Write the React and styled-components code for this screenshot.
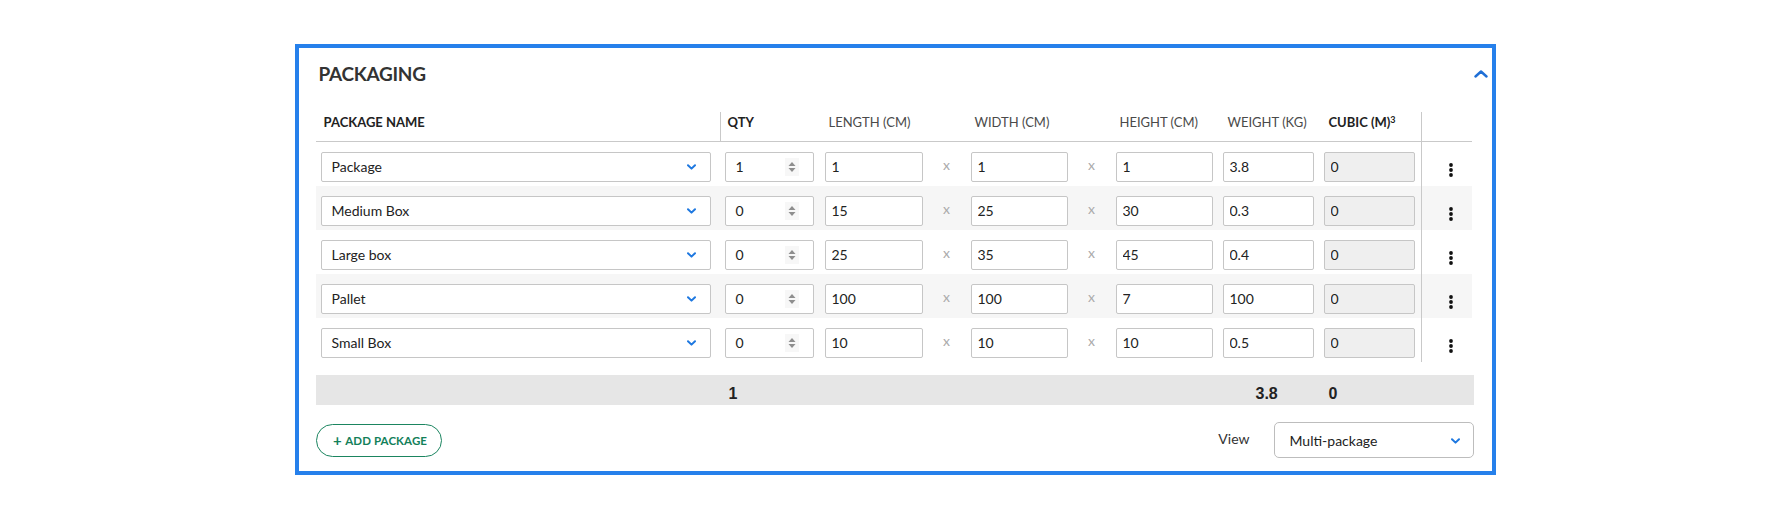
import React from 'react'
import styled, { createGlobalStyle } from 'styled-components'

const GlobalStyle = createGlobalStyle`
  body {
    margin: 0;
    background: #fff;
    font-family: Lato, "Open Sans", sans-serif;
    color: #222;
  }
`;

const COLS = '404px 100px 103px 48px 97px 48px 97px 101px 107px 1fr';

const Page = styled.div`
  display: flex;
  justify-content: center;
  padding-top: 44px;
`;

const Panel = styled.section`
  box-sizing: border-box;
  width: 1201px;
  height: 431px;
  border: 4px solid #2680eb;
  padding: 14px 17px 0;
`;

const TitleRow = styled.header`
  display: flex;
  justify-content: space-between;
  align-items: center;
  height: 24px;
  margin-right: -13px;
`;

const Title = styled.h2`
  margin: 0;
  padding-left: 3px;
  font-size: 19px;
  line-height: 24px;
  font-weight: 700;
  color: #333;
  letter-spacing: -0.3px;
`;

const Table = styled.div`
  width: 1156px;
  margin-top: 26px;
`;

const HeadRow = styled.div`
  display: grid;
  grid-template-columns: ${COLS};
  height: 30px;
  box-sizing: border-box;
  border-bottom: 1px solid #c9c9c9;
`;

const HeadCell = styled.div`
  padding: 2px 0 0 ${p => p.$inset}px;
  font-size: 13px;
  line-height: 16px;
  font-weight: ${p => (p.$bold ? 700 : 400)};
  color: ${p => (p.$bold ? '#222' : '#4a4a4a')};
  border-left: ${p => (p.$divider ? '1px solid #c9c9c9' : 'none')};
  white-space: nowrap;

  sup {
    font-size: 9px;
    vertical-align: top;
    line-height: 12px;
  }
`;

const Row = styled.div`
  display: grid;
  grid-template-columns: ${COLS};
  height: 44px;
  background: ${p => (p.$striped ? '#f6f6f6' : 'transparent')};
`;

const Cell = styled.div`
  box-sizing: border-box;
  display: flex;
  align-items: flex-start;
  padding: 10px 0 0 ${p => p.$inset || 0}px;
`;

const Times = styled.div`
  display: flex;
  justify-content: center;
  padding-top: 16px;
  font-size: 14px;
  line-height: 14px;
  color: #aaa;
`;

const ActionCell = styled.div`
  border-left: 1px solid #c9c9c9;
  padding: 19px 0 0 27px;
`;

const SelectBox = styled.div`
  box-sizing: border-box;
  width: ${p => p.$w}px;
  height: 30px;
  display: flex;
  align-items: center;
  justify-content: space-between;
  padding: 0 14px 2px 10px;
  border: 1px solid #c6c6c6;
  border-radius: 2px;
  background: #fff;
  font-size: 14px;
  color: #222;

  svg {
    margin-top: 2px;
  }
`;

const Field = styled.input`
  box-sizing: border-box;
  width: ${p => p.$w}px;
  height: 30px;
  margin: 0;
  padding: 0 0 2px 6px;
  border: 1px solid #c6c6c6;
  border-radius: 2px;
  background: ${p => (p.$disabled ? '#efefef' : '#fff')};
  font-family: Lato, "Open Sans", sans-serif;
  font-size: 14px;
  color: #222;
  outline: none;
`;

const QtyBox = styled.div`
  box-sizing: border-box;
  width: 89px;
  height: 30px;
  display: flex;
  align-items: center;
  justify-content: space-between;
  padding: 0 14px 2px 10px;
  border: 1px solid #c6c6c6;
  border-radius: 2px;
  background: #fff;
  font-size: 14px;
`;

const Spinner = styled.span`
  display: flex;
  padding: 3px;
  margin-top: 2px;
  background: #f7f7f7;
`;

const TotalBar = styled.div`
  display: grid;
  grid-template-columns: ${COLS};
  width: 1158px;
  height: 30px;
  margin-top: 13px;
  background: #e6e6e6;
`;

const Total = styled.div`
  padding: 11px 0 0 ${p => p.$inset || 0}px;
  font-family: "Liberation Sans", Arial, sans-serif;
  font-weight: 700;
  font-size: 16px;
  line-height: 16px;
  color: #222;
`;

const Bottom = styled.footer`
  display: flex;
  justify-content: space-between;
  align-items: center;
  height: 36px;
  margin-top: 17px;
  width: 1158px;
`;

const AddButton = styled.button`
  box-sizing: border-box;
  width: 126px;
  height: 33px;
  border: 1px solid #1b8560;
  border-radius: 17px;
  background: #fff;
  color: #13805a;
  font-family: Lato, "Open Sans", sans-serif;
  font-size: 11.5px;
  font-weight: 700;
  letter-spacing: 0.1px;
  cursor: pointer;
  padding: 0 0 0 3px;

  b {
    font-size: 15px;
    font-weight: 700;
    margin-right: 1px;
    vertical-align: -1px;
  }
`;

const ViewGroup = styled.div`
  display: flex;
  align-items: center;
  gap: 24px;
`;

const ViewLabel = styled.span`
  font-size: 14px;
  color: #333;
  margin-top: -4px;
`;

const ViewSelect = styled(SelectBox)`
  height: 36px;
  border-color: #bdbdbd;
  border-radius: 5px;
  padding: 0 13px 0 15px;
`;

const ChevronDown = () => (
  <svg width="9" height="6" viewBox="0 0 9 6" fill="none">
    <path d="M1 1.2 L4.5 4.6 L8 1.2" stroke="#1e78e0" strokeWidth="2" strokeLinecap="round" strokeLinejoin="round" />
  </svg>
);

const ChevronUp = () => (
  <svg width="14" height="8" viewBox="0 0 14 8" fill="none">
    <path d="M1.5 6.5 L7 1.5 L12.5 6.5" stroke="#1f6fd6" strokeWidth="2.4" strokeLinecap="round" strokeLinejoin="round" />
  </svg>
);

const SpinIcon = () => (
  <svg width="8" height="12" viewBox="0 0 8 12">
    <path d="M4 1 L7.5 5 L0.5 5 Z" fill="#8e8e8e" />
    <path d="M4 11 L7.5 7 L0.5 7 Z" fill="#8e8e8e" />
  </svg>
);

const Kebab = () => (
  <svg width="4" height="14" viewBox="0 0 4 14">
    <circle cx="2" cy="2" r="1.9" fill="#111" />
    <circle cx="2" cy="7" r="1.9" fill="#111" />
    <circle cx="2" cy="12" r="1.9" fill="#111" />
  </svg>
);

const packages = [
  { name: 'Package', qty: 1, length: 1, width: 1, height: 1, weight: 3.8, cubic: 0 },
  { name: 'Medium Box', qty: 0, length: 15, width: 25, height: 30, weight: 0.3, cubic: 0 },
  { name: 'Large box', qty: 0, length: 25, width: 35, height: 45, weight: 0.4, cubic: 0 },
  { name: 'Pallet', qty: 0, length: 100, width: 100, height: 7, weight: 100, cubic: 0 },
  { name: 'Small Box', qty: 0, length: 10, width: 10, height: 10, weight: 0.5, cubic: 0 },
];

const App = () => {
  const totalQty = packages.reduce((s, p) => s + p.qty, 0);
  const totalWeight = packages.reduce((s, p) => s + p.qty * p.weight, 0);

  return (
    <Page>
      <GlobalStyle />
      <Panel>
        <TitleRow>
          <Title>PACKAGING</Title>
          <ChevronUp />
        </TitleRow>

        <Table>
          <HeadRow>
            <HeadCell $inset={8} $bold>PACKAGE NAME</HeadCell>
            <HeadCell $inset={7} $bold $divider>QTY</HeadCell>
            <HeadCell $inset={9}>LENGTH (CM)</HeadCell>
            <HeadCell />
            <HeadCell $inset={4}>WIDTH (CM)</HeadCell>
            <HeadCell />
            <HeadCell $inset={4}>HEIGHT (CM)</HeadCell>
            <HeadCell $inset={15}>WEIGHT (KG)</HeadCell>
            <HeadCell $inset={15} $bold>CUBIC (M)<sup>3</sup></HeadCell>
            <HeadCell $divider />
          </HeadRow>

          {packages.map((p, i) => (
            <Row key={p.name} $striped={i % 2 === 1}>
              <Cell $inset={5}>
                <SelectBox $w={390}>
                  <span>{p.name}</span>
                  <ChevronDown />
                </SelectBox>
              </Cell>
              <Cell $inset={5}>
                <QtyBox>
                  <span>{p.qty}</span>
                  <Spinner><SpinIcon /></Spinner>
                </QtyBox>
              </Cell>
              <Cell $inset={5}><Field $w={98} readOnly value={p.length} /></Cell>
              <Times>x</Times>
              <Cell><Field $w={97} readOnly value={p.width} /></Cell>
              <Times>x</Times>
              <Cell><Field $w={97} readOnly value={p.height} /></Cell>
              <Cell $inset={10}><Field $w={91} readOnly value={p.weight} /></Cell>
              <Cell $inset={10}><Field $w={91} $disabled readOnly value={p.cubic} /></Cell>
              <ActionCell><Kebab /></ActionCell>
            </Row>
          ))}
        </Table>

        <TotalBar>
          <div />
          <Total $inset={9}>{totalQty}</Total>
          <div />
          <div />
          <div />
          <div />
          <div />
          <Total $inset={43}>{totalWeight}</Total>
          <Total $inset={15}>0</Total>
        </TotalBar>

        <Bottom>
          <AddButton><b>+</b> ADD PACKAGE</AddButton>
          <ViewGroup>
            <ViewLabel>View</ViewLabel>
            <ViewSelect $w={200}>
              <span>Multi-package</span>
              <ChevronDown />
            </ViewSelect>
          </ViewGroup>
        </Bottom>
      </Panel>
    </Page>
  )
}

export default App
